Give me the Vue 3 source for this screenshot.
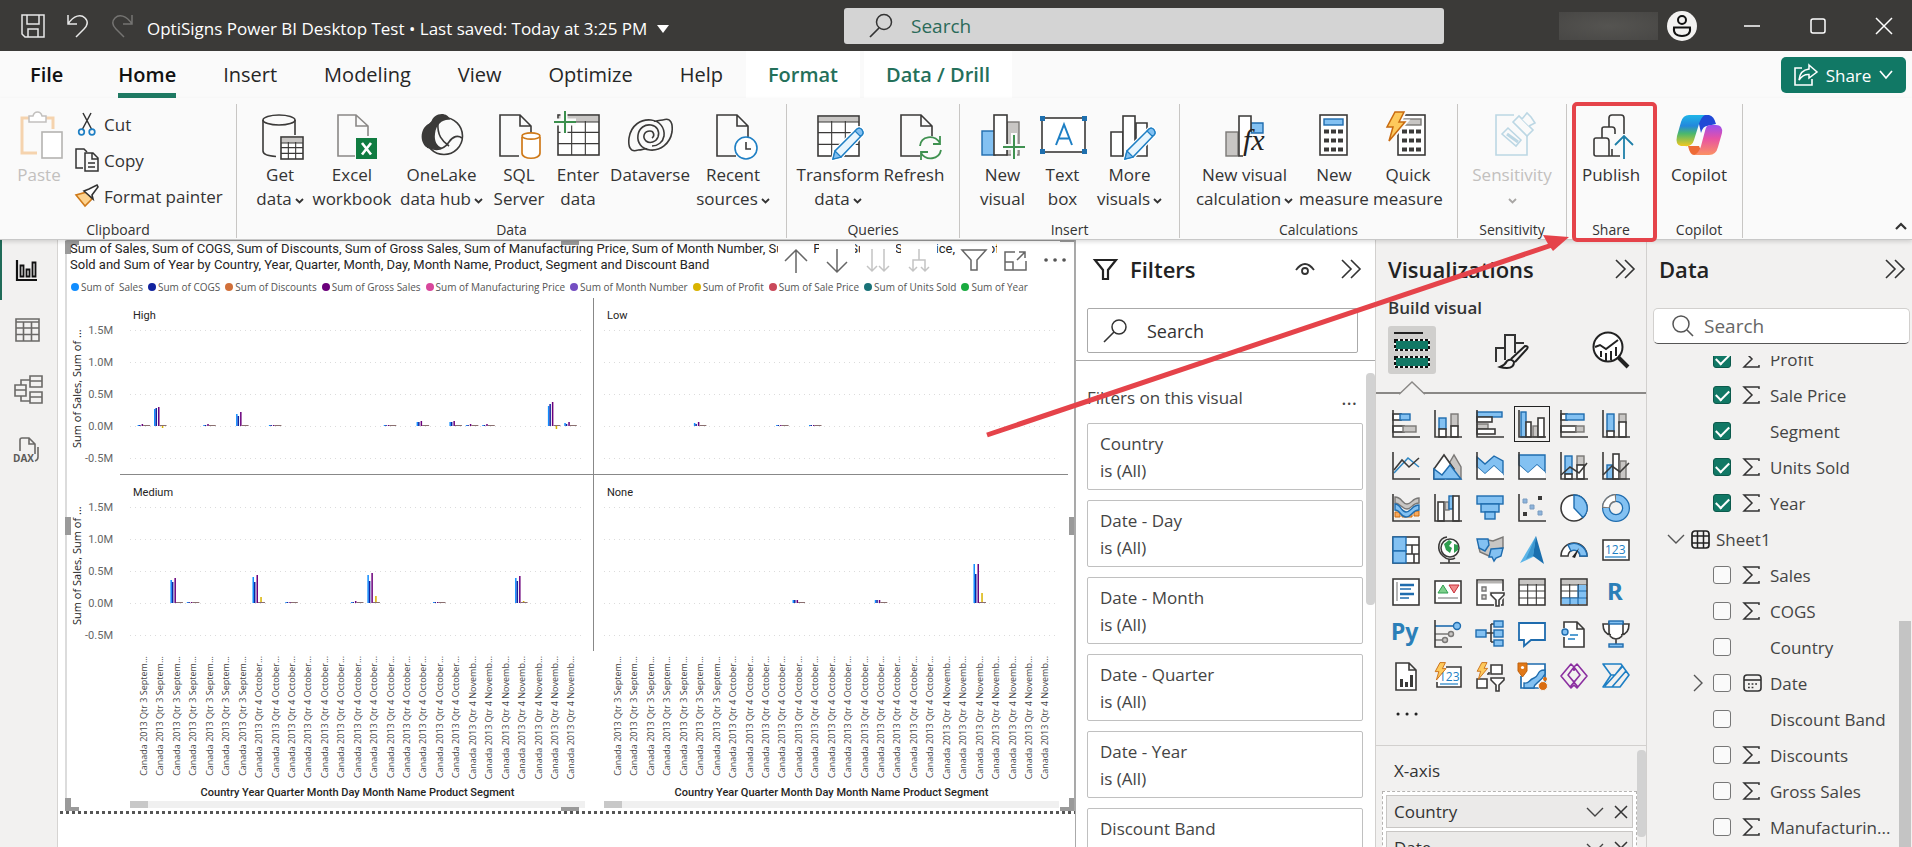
<script setup>
import { ref } from 'vue'

const tabs = ['File', 'Home', 'Insert', 'Modeling', 'View', 'Optimize', 'Help']
const contextTabs = ['Format', 'Data / Drill']

const D = 'stroke="#3b3a39" stroke-width="1.6" fill="none"'
const DW = 'stroke="#3b3a39" stroke-width="1.6" fill="#fff"'
const B = 'stroke="#1f6cae" stroke-width="1.4" fill="#83c1f2"'
const G = 'stroke="#7a7876" stroke-width="1.4" fill="#c8c6c4"'
const A = `<path d="M1 0V27H28" ${D}/>`
const page = (x) => `<path d="M${x + 19} 45H${x}V4H${x + 20}L${x + 31} 15V26M${x + 20} 4V15H${x + 31}" ${D}/>`
const calc = (x, scr) => `<rect x="${x}" y="4" width="27" height="40" ${DW}/><rect x="${x + 4}" y="8" width="19" height="6" ${scr}/><path d="M${x + 4} 20.500h19M${x + 4} 29.500h19M${x + 4} 38.500h19" stroke="#3b3a39" stroke-width="4" stroke-dasharray="5 2"/>`
const pencil = '<path d="M19 48L21 40L43 18Q46 16 48 19T48 24L27 46Z" fill="#fff" stroke="#fff" stroke-width="4"/><path d="M19 48L21 40L43 18Q46 16 48 19T48 24L27 46Z" fill="#e8f5fd" stroke="#1e7fc4" stroke-width="1.5"/><path d="M19 48L21 40L27 46ZM43 18Q46 16 48 19T48 24L46 25L41 20Z" fill="#83c1f2" stroke="#1e7fc4" stroke-width="1.2"/>'
const bolt = (s) => `<path transform="scale(${s})" d="M10 1H19L14 11H20L4 30L8 16H2Z" fill="#fdc95c" stroke="#c86a10" stroke-width="1.500"/>`
const grid = (x, y, w, h, hd) => `<rect x="${x}" y="${y}" width="${w}" height="${h}" ${DW}/><rect x="${x + 1}" y="${y + 1}" width="${w - 2}" height="${hd}" fill="#c8c6c4"/><path d="M${x} ${y + hd + 1}h${w}M${x} ${y + hd + (h - hd) / 3}h${w}M${x} ${y + hd + (h - hd) * 2 / 3}h${w}M${x + w / 3} ${y + hd}v${h - hd}M${x + w * 2 / 3} ${y + hd}v${h - hd}" stroke="#3b3a39" stroke-width="1.1" fill="none"/>`

const art = {
  get: `<path d="M7 9V40C7 43 12 45 20 45.500M39 9V24" ${D}/><ellipse cx="23" cy="9" rx="16" ry="5" ${D}/>${grid(25, 26, 22, 22, 5)}`,
  excel: `<path d="M27 45H10V4H28L40 15V25M28 4V15H40" stroke="#8a8886" stroke-width="1.6" fill="none"/><rect x="28" y="27" width="21" height="21" fill="#107c41"/><path d="M34 32L43 43.500M43 32L34 43.500" stroke="#fff" stroke-width="2.600"/>`,
  lake: `<path d="M13 12C15 1 30 0 32 9C25 8 18 13 17 23C16 30 19 35 24 37C15 40 11 36 8 36C0 28 4 14 13 12Z" fill="#3b3a39"/><circle cx="26" cy="25" r="18.500" ${D}/><path d="M13 12C10 22 12 31 20 38M20 12C19 24 24 30 31 35M9 36C20 41 27 37 31 31S40 24 44 27" ${D}/>`,
  sql: `${page(5)}<path d="M27 26V42C27 49 45 49 45 42V26" fill="#fff" stroke="#cf7a1a" stroke-width="1.700"/><ellipse cx="36" cy="25" rx="9" ry="3.200" fill="#fff" stroke="#cf7a1a" stroke-width="1.700"/>`,
  enter: `${grid(4, 4, 41, 40, 6)}<path d="M10 0V22M0 11H22" stroke="#fafafa" stroke-width="7"/><path d="M11 0V22M0 11H22" stroke="#3b8f4d" stroke-width="2"/>`,
  verse: `<path d="M37 9C45 6 47 13 46 21C44 33 34 40 24 39C15 38 11 31 12 24C13 17 19 13 25 14C31 15 34 20 32 26C30 31 24 33 20 30C16 26 18 20 24 20C28 20 29 25 26 27" ${D}/><path d="M12 39C4 42 2 35 3 27C5 14 15 8 25 9C34 10 39 17 38 25C37 31 32 35 26 35M37 9C32 9 30 11 28 10M12 39C17 39 19 37 21 38" ${D}/>`,
  recent: `${page(8)}<circle cx="37" cy="37" r="11" fill="#fff" stroke="#1e7fc4" stroke-width="1.600"/><path d="M37 31V38H42" ${D}/>`,
  transform: `${grid(4, 5, 41, 40, 5)}${pencil}`,
  refresh: `${page(11)}<circle cx="40" cy="37" r="12" fill="#fafafa"/><path d="M30 35C31 25 44 23 50 32M50 25V33H43M51 39C49 49 36 50 31 42M31 49V41H38" stroke="#3f9150" stroke-width="1.800" fill="none"/>`,
  visual: `<rect x="3" y="20" width="13" height="24" ${B}/><rect x="28" y="11" width="12" height="33" ${G}/><rect x="15" y="4" width="13" height="40" ${DW}/><path d="M35 22V48M24 36H47" stroke="#fafafa" stroke-width="6"/><path d="M35 24V48M24 36H46" stroke="#3f9150" stroke-width="2"/>`,
  text: `<rect x="3" y="7" width="43" height="34" ${DW}/><path d="M1 5h5v5h-5zM43 5h5v5h-5zM1 38h5v5h-5zM43 38h5v5h-5z" fill="#1e6fae"/><path d="M17 34L25 13.500L33 34M20 27.500H30" stroke="#1e7fc4" stroke-width="2" fill="none"/>`,
  more: `<path d="M5 45V21H17V45ZM30 45V12H41V45Z" ${DW}/><rect x="17" y="5" width="12" height="40" ${DW}/>${pencil}`,
  vcalc: `<rect x="5" y="21" width="12" height="24" ${G}/><path d="M30 12H42V22H30Z" ${B}/><path d="M22 45H18V5H30V21" ${DW}/><text x="22" y="39" font-family="Liberation Serif" font-style="italic" font-size="30" fill="#222">fx</text>`,
  calc: calc(10, B),
  quick: `${calc(14, G)}<g transform="translate(1 0)"><path d="M10 1H19L14 11H20L4 30L8 16H2Z" stroke="#fafafa" stroke-width="5"/>${bolt(1)}</g>`,
  sens: `<g fill="#fafafa" stroke="#bcd7e4" stroke-width="1.600"><path d="M26 4H8V44H39V22"/><path d="M14 23L20 17L33 29L28 35Z"/><path d="M19 23L30 31" stroke-width="3"/><path d="M25 11L31 5L45 19L39 25Z"/><path d="M34 8L39 2L43 6L47 12L41 15"/></g>`,
  publish: `<path d="M17 45H9Q7 45 7 43V29Q7 27 9 27H19Q22 27 22 30V45H17M22 45H33M15 27V18Q15 16 17 16H25Q28 16 28 19V23M25 45V38M22 16V7Q22 4 25 4H34Q37 4 37 7V23" ${D}/><path d="M37 48V25M28 34L37 25L46 34" stroke="#1e7fa8" stroke-width="1.800" fill="none"/>`,
  copilot: `<defs><linearGradient id="cpA" x1="0" y1="0" x2="0" y2="1"><stop offset="0" stop-color="#1fb5e8"/><stop offset=".35" stop-color="#2388dc"/><stop offset=".6" stop-color="#4cb86c"/><stop offset="1" stop-color="#f2c81e"/></linearGradient><linearGradient id="cpB" x1="0" y1="0" x2="0" y2="1"><stop offset="0" stop-color="#9b4ff0"/><stop offset=".45" stop-color="#e752a4"/><stop offset="1" stop-color="#fb9163"/></linearGradient></defs><path d="M22 4H34Q39 5 41 13L32 15Q28 15 26 22Z" fill="#2049d6"/><path d="M13 35H24L28 44H19Q15 44 13 35Z" fill="#ee6a36"/><path d="M14 4H30Q26 6 24 13L19 29Q17 36 10 35H6Q0 34 2 25L6 11Q8 4 14 4Z" fill="url(#cpA)"/><path d="M35 14H41Q48 14 47 22L43 36Q41 44 34 44H19Q24 42 26 35L30 20Q31 14 35 14Z" fill="url(#cpB)"/>`,
}

const groups = [
  { name: 'Data', cls: 'g-data', items: [
    { id: 'get', a: 'Get', b: 'data', more: true },
    { id: 'excel', a: 'Excel', b: 'workbook' },
    { id: 'lake', a: 'OneLake', b: 'data hub', more: true },
    { id: 'sql', a: 'SQL', b: 'Server' },
    { id: 'enter', a: 'Enter', b: 'data' },
    { id: 'verse', a: 'Dataverse' },
    { id: 'recent', a: 'Recent', b: 'sources', more: true },
  ] },
  { name: 'Queries', cls: 'g-queries', items: [
    { id: 'transform', a: 'Transform', b: 'data', more: true },
    { id: 'refresh', a: 'Refresh' },
  ] },
  { name: 'Insert', cls: 'g-insert', items: [
    { id: 'visual', a: 'New', b: 'visual' },
    { id: 'text', a: 'Text', b: 'box' },
    { id: 'more', a: 'More', b: 'visuals', more: true },
  ] },
  { name: 'Calculations', cls: 'g-calc', items: [
    { id: 'vcalc', a: 'New visual', b: 'calculation', more: true },
    { id: 'calc', a: 'New', b: 'measure' },
    { id: 'quick', a: 'Quick', b: 'measure' },
  ] },
  { name: 'Sensitivity', cls: 'g-sens', items: [{ id: 'sens', a: 'Sensitivity', b: '', more: true, off: true }] },
  { name: 'Share', cls: 'g-share', items: [{ id: 'publish', a: 'Publish' }] },
  { name: 'Copilot', cls: 'g-copilot', items: [{ id: 'copilot', a: 'Copilot' }] },
]

const rail = [
  { name: 'Report view', svg: '<path d="M2 3V23H22" stroke="#111" stroke-width="2.200" fill="none"/><path d="M5.500 8.500h3v11h-3zM11.500 12.500h3v7h-3zM17.500 5.500h3v14h-3z" stroke="#111" stroke-width="1.800" fill="none"/>' },
  { name: 'Table view', svg: '<path d="M1 2H24V24H1ZM1 5H24M1 11H24M1 17.500H24M8.500 5V24M16.500 5V24" stroke="#6b6967" stroke-width="1.600" fill="none"/>' },
  { name: 'Model view', svg: '<path d="M0 8H11V19H0ZM0 13H11M15 -1H27V10H15ZM15 4H27M15 15H27V26H15ZM15 20H27M6 8V3H15M6 19V24H15" stroke="#6b6967" stroke-width="1.600" fill="none"/>' },
  { name: 'DAX query view', svg: '<path d="M5 14V3Q5 1 7 1H14L20 7V17M14 1V7H20M23 10V20Q23 23 20 24" stroke="#6b6967" stroke-width="1.600" fill="none"/><text x="-2" y="25" font-family="Open Sans" font-weight="700" font-size="10" fill="#5c5a58">DAX</text>' },
]

const hoverTools = [
  { name: 'Drill up', svg: '<path d="M12 24V1M1 12L12 1L23 12" stroke="#666" stroke-width="1.500" fill="none"/>' },
  { name: 'Drill down', svg: '<path d="M12 0V23M2 13L12 23L22 13" stroke="#666" stroke-width="1.500" fill="none"/>' },
  { name: 'Next level', svg: '<path d="M6 0V22M1 17L6 22L11 17M18 0V22M13 17L18 22L23 17" stroke="#c4c4c4" stroke-width="1.500" fill="none"/>' },
  { name: 'Expand down', svg: '<path d="M12 0V11M6 22V11H18V22M2 18L6 22L10 18M14 18L18 22L22 18" stroke="#c4c4c4" stroke-width="1.500" fill="none"/>' },
  { name: 'Filters applied', cls: 'apart', svg: '<path d="M0 1H24L15 11V21H9V11Z" stroke="#666" stroke-width="1.500" fill="none"/>' },
  { name: 'Focus mode', svg: '<path d="M12 3H2V21H23V12M2 13H10V21M14 11L22 3M16 3H22V9" stroke="#666" stroke-width="1.500" fill="none"/>' },
  { name: 'More options', svg: '<path d="M2 11h.1M11 11h.1M20 11h.1" stroke="#555" stroke-width="3.600" stroke-linecap="round"/>' },
]

const series = [
  ['Sum of \u00a0Sales', '#118dff'], ['Sum of COGS', '#12239e'], ['Sum of Discounts', '#d1703a'],
  ['Sum of Gross Sales', '#6b007b'], ['Sum of Manufacturing Price', '#d8479c'], ['Sum of Month Number', '#744ec2'],
  ['Sum of Profit', '#d9b300'], ['Sum of Sale Price', '#c9485a'], ['Sum of Units Sold', '#197278'], ['Sum of Year', '#1aab40'],
]

const ticks = ['1.5M', '1.0M', '0.5M', '0.0M', '-0.5M']
/* month index, then Sales, COGS, Gross Sales and Profit bar lengths */
const facets = [
  { name: 'High', data: [[0, 1, 1, 2, 0], [1, 17, 18, 19, -2], [4, 1, 1, 2, 0], [6, 12, 10, 14, 1], [8, 1, 1, 1, 0], [15, 1, 1, 1, 0], [17, 4, 4, 5, 0], [19, 4, 4, 5, 0], [20, 1, 1, 2, 0], [21, 1, 1, 2, 0], [25, 20, 22, 24, -3], [26, 3, 2, 4, 0]] },
  { name: 'Low', data: [[5, 3, 2, 4, 0], [10, 1, 1, 1, 0], [12, 1, 1, 1, 0]] },
  { name: 'Medium', data: [[2, 23, 21, 25, 1], [3, 1, 1, 1, 0], [7, 26, 21, 28, 6], [9, 1, 1, 1, 0], [13, 1, 1, 2, 0], [14, 28, 22, 30, 7], [18, 1, 1, 1, 0], [23, 25, 22, 27, 2]] },
  { name: 'None', data: [[11, 3, 3, 3, 0], [16, 3, 3, 3, 0], [22, 39, 29, 39, 10]] },
]
const bars = (f) => f.data.flatMap(([i, s, c, g, p]) => {
  const at = `${1.3 + ((i + 0.5) / 27) * 97.6}%`
  const bar = (dx, h, color, w = 1.5) => ({ at, dx, w, y: h < 0 ? 98 : 98 - h, h: Math.abs(h), color })
  return [bar(-6.5, s, '#118dff'), bar(-5, c, '#12239e'), bar(-2.5, g, '#6b007b'), bar(1.3, p, '#d9b300'), bar(-1, 1, '#8a6f70', 7)]
})
const months = [...Array(7).fill('Canada 2013 Qtr 3 Septem...'), ...Array(13).fill('Canada 2013 Qtr 4 October...'), ...Array(7).fill('Canada 2013 Qtr 4 Novemb...')]

const filters = ['Country', 'Date - Day', 'Date - Month', 'Date - Quarter', 'Date - Year', 'Discount Band']

const r = (x, y, w, h, s) => `<rect x="${x}" y="${y}" width="${w}" height="${h}" ${s}/>`
const funnel = (x, y) => `<path transform="translate(${x} ${y})" d="M0 0H13V2L8 7V13H5V7L0 2Z" fill="#fff" stroke="#f2f1f0" stroke-width="4"/><path transform="translate(${x} ${y})" d="M0 0H13V2L8 7V13H5V7L0 2Z" ${DW}/>`
const gallery = [
  ['Stacked bar chart', r(1, 4, 8, 6, DW) + r(8, 4, 10, 6, B) + r(1, 16, 11, 6, DW) + r(11, 16, 13, 6, G) + A],
  ['Stacked column chart', r(5, 8, 7, 11, B) + r(5, 19, 7, 8, DW) + r(17, 4, 7, 12, G) + r(17, 16, 7, 11, DW) + A],
  ['Clustered bar chart', r(1, 2, 25, 5, B) + r(1, 7, 15, 5, DW) + r(1, 14, 11, 5, G) + r(1, 19, 18, 5, DW) + A],
  ['Clustered column chart', r(3, 2, 5, 25, B) + r(8, 12, 5, 15, DW) + r(15, 16, 5, 11, G) + r(20, 8, 6, 19, DW) + A],
  ['100% stacked bar chart', r(1, 4, 6, 6, DW) + r(6, 4, 18, 6, B) + r(1, 16, 15, 6, DW) + r(16, 16, 8, 6, G) + A],
  ['100% stacked column chart', r(5, 4, 7, 18, B) + r(5, 21, 7, 6, DW) + r(17, 4, 7, 9, G) + r(17, 12, 7, 15, DW) + A],
  ['Line chart', `<path d="M2 21L16 6L27 15" stroke="#2e86c1" stroke-width="1.600" fill="none"/><path d="M2 18L10 8L17 15L27 6" ${D}/>` + A],
  ['Area chart', `<path d="M13 15L20 3L27 15V27H13Z" ${G}/><path d="M0 17L10 3L20 17L10 27H0Z" ${DW}/><path d="M0 27V17L8 23L16 13L27 27Z" ${B}/>`],
  ['Stacked area chart', `<path d="M1 5L9 12L18 4L27 9V22L18 14L9 22L1 15Z" ${B}/><path d="M1 15L9 22L18 14L27 22V27H1Z" fill="#fff"/>` + A],
  ['100% stacked area chart', `<path d="M1 3H27V20L19 13L10 21L1 13Z" ${B}/><path d="M2 14L10 21L19 13L27 20V27H2Z" fill="#fff"/>` + A],
  ['Line and stacked column chart', r(5, 4, 7, 18, B) + r(5, 22, 7, 5, DW) + r(17, 4, 7, 9, G) + r(17, 13, 7, 14, DW) + `<path d="M1 23L10 15L19 21L27 11" ${D}/>` + A],
  ['Line and clustered column chart', r(5, 13, 6, 14, B) + r(11, 2, 6, 25, DW) + r(18, 9, 6, 18, G) + `<path d="M1 23L10 14L18 20L27 11" ${D}/>` + A],
  ['Ribbon chart', `<path d="M3 3C10 3 10 10 15 10S20 4 27 4V9C20 9 20 15 15 15S8 9 3 9Z" ${G}/><path d="M3 18H8V23H3ZM22 17H27V22H22ZM10 20H20V23H10Z" fill="#f9a95c" stroke="#c86a10"/><path d="M3 10C9 10 9 18 14 18S20 11 27 11V16C20 16 20 23 14 23S9 16 3 16Z" ${B}/>` + A],
  ['Waterfall chart', r(4, 8, 6, 19, DW) + r(11, 8, 4, 8, G) + r(15, 2, 4, 13, B) + r(19, 2, 6, 25, DW) + A],
  ['Funnel', r(1, 2, 26, 8, B) + r(5, 10, 18, 8, B) + r(9, 18, 10, 7, B)],
  ['Scatter chart', '<path d="M5 5h4v4h-4zM12 11h4v4h-4zM20 17h4v4h-4z" fill="#8db4dc" stroke="#7a9cc0"/><path d="M20 2h4v4h-4zM5 18h4v4h-4z" fill="#3b3a39"/>' + A],
  ['Pie chart', `<circle cx="14" cy="14" r="13" ${DW}/><path d="M14 1V14L23 23.500A13 13 0 0 0 14 1Z" ${B}/>`],
  ['Donut chart', `<circle cx="14" cy="14" r="10" fill="none" stroke="#1f6cae" stroke-width="8"/><circle cx="14" cy="14" r="10" fill="none" stroke="#83c1f2" stroke-width="5.500"/><path d="M4 14A10 10 0 0 1 14 4" stroke="#7a7876" stroke-width="8" fill="none"/><path d="M4 13A10 10 0 0 1 13 4" stroke="#fff" stroke-width="5.500" fill="none"/>`],
  ['Treemap', r(1, 1, 26, 26, DW) + r(1, 1, 13, 14, B) + r(1, 15, 13, 12, B) + `<path d="M14 9H27M14 18H27M20 9V18M22 18V27" ${D}/>`],
  ['Map', `<circle cx="16" cy="12" r="9" fill="#fff" stroke="#3b3a39" stroke-width="1.500"/><path d="M10 8L15 4L18 6L15 10L18 12L16 17L12 14ZM20 8L24 9L24 14L20 17Z" fill="#2f9e4f"/><path d="M13 1C4 2 2 14 9 20C13 24 18 24 21 22M15 23V27M6 27H26" ${D}/>`],
  ['Filled map', `<path d="M12 4L17 5L27 1V12L16 14L13 20L4 16L3 12L10 13Z" ${G}/><path d="M1 3H12L13 9L9 15L3 12Z" ${B}/><path d="M15 13L27 12L25 20L20 22L18 25L16 21L13 21Z" ${B}/>`],
  ['Azure map', '<path d="M18 0L2 27L17 20Z" fill="#5bb5e8"/><path d="M18 0L26 28L15 20Z" fill="#1a6fae"/><path d="M18 0L15 20L8 23Z" fill="#3d97cf"/>'],
  ['Gauge', `<path d="M1 20A13 13 0 0 1 27 20H20A6 6 0 0 0 8 20Z" ${DW}/><path d="M8 9A13 13 0 0 1 27 20H20A6 6 0 0 0 11 15Z" ${B}/><path d="M12 21L19 12L15 22Z" fill="#222"/>`],
  ['Card', r(1, 4, 26, 20, DW) + '<text x="3" y="18" font-family="Open Sans" font-size="12" fill="#1e7fc4">123</text><path d="M3 21H24" stroke="#1e7fc4" stroke-width="1.200"/>'],
  ['Multi-row card', r(1, 1, 26, 26, DW) + '<path d="M5 4V23" stroke="#999" stroke-width="1.400"/><path d="M8 7H22M8 16H22" stroke="#1f6cae" stroke-width="2.600"/><path d="M8 11H19M8 20H17" stroke="#1f6cae" stroke-width="1.400"/>'],
  ['KPI', r(1, 3, 26, 22, DW) + '<path d="M4 15L9 7L14 15Z" fill="#7fd08c" stroke="#2f9e4f"/><path d="M15 7H25L20 15Z" fill="#f08a8a" stroke="#c8303a"/><path d="M4 20H24" stroke="#999" stroke-width="1.400"/>'],
  ['Slicer', r(1, 2, 26, 25, DW) + '<path d="M2 4H26" stroke="#b5b3b1" stroke-width="3"/><path d="M6 9h4v4h-4zM6 17h4v4h-4z" fill="#d8d6d4" stroke="#777" stroke-width="1.400"/>' + funnel(15, 15)],
  ['Table', grid(1, 1, 26, 26, 5)],
  ['Matrix', grid(1, 1, 26, 26, 5) + '<path d="M19 7H26V26H2V20H10M10 20H19V7" fill="#83c1f2" fill-rule="evenodd"/><path d="M18 7V26M10 20V26M2 20H26M18 13H26" stroke="#1f6cae" stroke-width="1.200"/>'],
  ['R script visual', '<text x="5" y="22" font-family="Noto Sans" font-weight="700" font-size="24" fill="#2b7fb8">R</text>'],
  ['Python visual', '<text x="-1" y="20" font-family="Noto Sans" font-weight="700" font-size="23" fill="#2b7fb8">Py</text>'],
  ['Key influencers', `<path d="M1 6H20" stroke="#1f6cae" stroke-width="1.600"/><circle cx="23" cy="6" r="3.500" ${B}/><path d="M1 14H14M1 20H9" stroke="#7a7876" stroke-width="1.600"/><circle cx="17" cy="14" r="2.500" ${G}/><circle cx="11" cy="20" r="2.500" ${G}/>` + A],
  ['Decomposition tree', `<path d="M10 13H18M15 4V22M15 4H18M15 22H18" ${D}/>` + r(0, 10, 10, 7, B) + r(18, 1, 9, 6, B) + r(18, 10, 9, 7, B) + r(18, 20, 9, 6, B)],
  ['Q&A', '<path d="M1 3H27V20H13L6 26V20H1Z" stroke="#1f6cae" stroke-width="1.800" fill="#fff"/>'],
  ['Narrative', `<path d="M4 8V2H17L24 9V27H4V17M17 2V9H24" ${DW}/><circle cx="5" cy="12" r="3" ${B}/><path d="M10 15H18M8 19H15" stroke="#1e7fc4" stroke-width="1.600"/>`],
  ['Metrics', `<path d="M8 4H1Q1 14 9 15M20 4H27Q27 14 19 15M7 2H21V12Q21 18 14 19Q7 18 7 12ZM14 19V24" ${DW}/>` + r(7, 1, 14, 3, B) + r(7, 24, 14, 3, B)],
  ['Paginated report', `<path d="M4 1H17L24 8V28H4ZM17 1V8H24" ${DW}/><path d="M8 17h3v8h-3zM13 20h3v5h-3zM18 13h3v12h-3z" fill="#3b3a39"/>`],
  ['Card (new)', `<path d="M12 5H27V25H3V20" ${DW}/><text x="5" y="19" font-family="Open Sans" font-size="12" fill="#1e7fc4">123</text><path d="M6 22H24" stroke="#1e7fc4" stroke-width="1.200"/>` + bolt(0.6)],
  ['Slicer (new)', `<path d="M15 3H26V12H15Z" ${DW}/><path d="M1 17H11V26H1ZM11 12H13V10" ${DW}/>` + funnel(15, 16) + bolt(0.58)],
  ['ArcGIS map', `<path d="M8 2H27V26H3V14" fill="#fff" stroke="#1f6cae" stroke-width="1.700"/><path d="M27 8C18 8 22 14 16 16S12 22 6 21V26H16C16 20 22 22 27 12Z" ${B}/><path d="M0 1H9V9L4.500 15L0 9Z" fill="#e07818" stroke="#c0600c"/><circle cx="4.500" cy="5.500" r="1.600" fill="#fff"/><circle cx="25" cy="24" r="4.500" fill="#d96c10" stroke="#f2f1f0"/><circle cx="27" cy="17" r="2" fill="#d96c10"/>`],
  ['Power Apps', '<path d="M11 2L1 14L11 26L14 23L17 26L27 14L17 2L14 5ZM14 5L8 13L14 20L20 13ZM14 9V5M8 13L18 25M20 13L10 25" stroke="#8b2fa0" stroke-width="1.600" fill="none" stroke-linejoin="round"/>'],
  ['Power Automate', '<path d="M1 2H19L27 13L18 25H1L9 13ZM9 13H13L20 4M3 24L20 5M10 25L24 9" stroke="#1e7fc4" stroke-width="1.600" fill="none" stroke-linejoin="round"/>'],
]

const SIGMA = '<path d="M16 3V1H1L9 9L1 17H16V15" stroke="#333" stroke-width="1.500" fill="none"/>'
const CAL = '<rect x="1" y="1" width="17" height="16" rx="3" stroke="#333" stroke-width="1.600" fill="none"/><path d="M1 6H18" stroke="#333" stroke-width="1.600"/><path d="M5 10H15M5 13.500H12" stroke="#333" stroke-width="1.600" stroke-dasharray="1.800 1.800"/>'
const fields = ref([
  { name: 'Profit', on: true, icon: SIGMA }, { name: 'Sale Price', on: true, icon: SIGMA }, { name: 'Segment', on: true },
  { name: 'Units Sold', on: true, icon: SIGMA }, { name: 'Year', on: true, icon: SIGMA },
  { name: 'Sheet1', table: true },
  { name: 'Sales', icon: SIGMA }, { name: 'COGS', icon: SIGMA }, { name: 'Country' }, { name: 'Date', icon: CAL, open: true },
  { name: 'Discount Band' }, { name: 'Discounts', icon: SIGMA }, { name: 'Gross Sales', icon: SIGMA }, { name: 'Manufacturin...', icon: SIGMA },
])
</script>

<template>
  <div class="app">
    <header class="titlebar">
      <div class="quick">
        <button aria-label="Save"><svg width="24" height="24"><path d="M1 1H23V23H4L1 20ZM6 1V10H18V1M7 23V15H17V23" stroke="#e8e8e8" stroke-width="1.5" fill="none" /></svg></button>
        <button aria-label="Undo"><svg width="24" height="24"><path d="M2 1V10H11M2 10C8 1 15 0 19 4S21 12 18 15L10 23" stroke="#e8e8e8" stroke-width="1.500" fill="none" /></svg></button>
        <button aria-label="Redo"><svg width="24" height="24"><path d="M21 1V10H12M21 10C15 1 8 0 4 4S2 12 5 15L13 23" stroke="#757472" stroke-width="1.500" fill="none" /></svg></button>
      </div>
      <button class="doc">OptiSigns Power BI Desktop Test • Last saved: Today at 3:25 PM<svg width="12" height="8"><path d="M0 0H12L6 8Z" fill="#fff" /></svg></button>
      <label class="topsearch">
        <svg width="24" height="24"><circle cx="15" cy="8" r="7.500" stroke="#333" stroke-width="1.500" fill="none" /><path d="M10 14L1 23" stroke="#333" stroke-width="1.700" /></svg>
        <input type="text" placeholder="Search" aria-label="Search">
      </label>
      <div class="account">
        <span class="masked"></span>
        <button class="avatar" aria-label="Account"><svg width="30" height="30"><circle cx="15" cy="15" r="15" fill="#f3f2f1" /><circle cx="15" cy="9" r="4" stroke="#111" stroke-width="2" fill="none" /><path d="M7 16.500H23Q24 25 15 25T7 16.500Z" stroke="#111" stroke-width="2" fill="none" /></svg></button>
      </div>
      <div class="win">
        <button aria-label="Minimize"><svg width="16" height="16"><path d="M0 8H16" stroke="#fff" stroke-width="1.500" /></svg></button>
        <button aria-label="Maximize"><svg width="16" height="16"><rect x="1" y="1" width="14" height="14" rx="2" stroke="#fff" stroke-width="1.500" fill="none" /></svg></button>
        <button aria-label="Close"><svg width="16" height="16"><path d="M0 0L16 16M16 0L0 16" stroke="#fff" stroke-width="1.500" /></svg></button>
      </div>
    </header>

    <nav class="tabs">
      <button v-for="t in tabs" :key="t" class="tab" :class="{ file: t === 'File', home: t === 'Home' }"><span>{{ t }}</span></button>
      <button v-for="t in contextTabs" :key="t" class="tab context"><span>{{ t }}</span></button>
      <button class="share">
        <svg width="24" height="22"><path d="M8 4H1V21H18V15" stroke="#fff" stroke-width="1.600" fill="none" /><path d="M15 1L23 8L15 14V10.500Q9 10 5 16Q6 6 15 5Z" stroke="#fff" stroke-width="1.500" fill="none" /></svg>
        Share
        <svg width="14" height="10"><path d="M1 1L7 8L13 1" stroke="#fff" stroke-width="1.700" fill="none" /></svg>
      </button>
    </nav>

    <section class="ribbon">
      <div class="group g-clip">
        <div class="tools">
          <button class="tool paste off">
            <svg width="48" height="48"><path d="M22 42H7V7H38V18" stroke="#f5d3ae" stroke-width="3" fill="none" /><path d="M14 11V5H18Q19 1 22.500 1T27 5H31V11Z" fill="#fff" stroke="#c2c0be" stroke-width="1.500" /><rect x="27" y="21" width="20" height="26" fill="#fff" stroke="#b5b3b1" stroke-width="1.600" /></svg>
            <span>Paste</span>
          </button>
          <div class="clipcol">
            <button><svg width="24" height="24"><path d="M8 1L17 18M16 1L7 18" stroke="#333" stroke-width="1.500" /><circle cx="6.500" cy="20" r="2.800" stroke="#1e7fc4" stroke-width="1.700" fill="none" /><circle cx="17" cy="20" r="2.800" stroke="#1e7fc4" stroke-width="1.700" fill="none" /></svg>Cut</button>
            <button><svg width="24" height="24"><path d="M8 20H1V1H9L12 4" stroke="#333" stroke-width="1.500" fill="none" /><path d="M10 5H18L23 10V23H10ZM17 5V11H23M13 15H20M13 19H20" stroke="#333" stroke-width="1.500" fill="none" /></svg>Copy</button>
            <button><svg width="24" height="24"><path d="M10 22L1 11L12 8L17 15Z" fill="#fdd28e" stroke="#cf7a1a" stroke-width="1.600" /><path d="M9 7L14 5L22 1L23 3L17 11L18 15Z" fill="#fff" stroke="#333" stroke-width="1.600" /></svg>Format painter</button>
          </div>
        </div>
        <h2>Clipboard</h2>
      </div>
      <div v-for="g in groups" :key="g.name" class="group" :class="g.cls">
        <div class="tools">
          <button v-for="b in g.items" :key="b.id" class="tool" :class="['t-' + b.id, { off: b.off }]">
            <svg width="48" height="48" v-html="art[b.id]"></svg>
            <span>{{ b.a }}</span>
            <span v-if="b.b || b.more">{{ b.b }}<svg v-if="b.more" class="chev" width="9" height="6"><path d="M1 1L4.500 4.500L8 1" :stroke="b.off ? '#a8a6a4' : '#333'" stroke-width="1.800" fill="none" /></svg></span>
          </button>
        </div>
        <h2>{{ g.name }}</h2>
      </div>
      <button class="collapse" aria-label="Collapse ribbon"><svg width="12" height="8"><path d="M1 7L6 2L11 7" stroke="#333" stroke-width="2.200" fill="none" /></svg></button>
    </section>

    <main class="work">
      <nav class="rail">
        <button v-for="v in rail" :key="v.name" :aria-label="v.name"><svg width="26" height="26" v-html="v.svg"></svg></button>
      </nav>

      <section class="canvas">
        <article class="visual">
          <h1>Sum of Sales, Sum of COGS, Sum of Discounts, Sum of Gross Sales, Sum of Manufacturing Price, Sum of Month Number, Sum of Profit, Sum of Sale Price, Sum of Unit<br>Sold and Sum of Year by Country, Year, Quarter, Month, Day, Month Name, Product, Segment and Discount Band</h1>
          <ul class="legend">
            <li v-for="s in series" :key="s[0]"><i :style="{ background: s[1] }"></i>{{ s[0] }}</li>
          </ul>
          <div class="facets">
            <template v-for="(f, n) in facets" :key="f.name">
              <div v-if="n % 2 === 0" class="axis" :class="{ lower: n > 1 }">
                <span class="ytitle">Sum of Sales, Sum of ...</span>
                <ol><li v-for="t in ticks" :key="t">{{ t }}</li></ol>
              </div>
              <div class="facet" :class="{ right: n % 2, lower: n > 1 }">
                <h3>{{ f.name }}</h3>
                <svg class="plot" width="100%" height="136">
                  <line v-for="k in 5" :key="k" x1="0" x2="100%" :y1="k * 32 - 29.5" :y2="k * 32 - 29.5" stroke="#dcdcdc" stroke-dasharray="1 4" />
                  <rect v-for="(b, j) in bars(f)" :key="j" :x="b.at" :y="b.y" :width="b.w" :height="b.h" :fill="b.color" :transform="`translate(${b.dx} 0)`" />
                </svg>
              </div>
            </template>
          </div>
          <div class="xaxes">
            <div v-for="k in 2" :key="k" class="xaxis">
              <ol><li v-for="(m, i) in months" :key="i">{{ m }}</li></ol>
              <h4>Country Year Quarter Month Day Month Name Product Segment</h4>
              <div class="hscroll"><i></i></div>
            </div>
          </div>
          <div class="hover">
            <button v-for="t in hoverTools" :key="t.name" :class="t.cls" :aria-label="t.name"><svg width="24" height="24" v-html="t.svg"></svg></button>
          </div>
          <i v-for="h in ['tl', 'tm', 'tr', 'ml', 'mr', 'bl', 'bm', 'br']" :key="h" class="handle" :class="h"></i>
        </article>
        <div class="pageedge"></div>
      </section>

      <aside class="filters">
        <header>
          <svg width="25" height="23"><path d="M2 2H23L15 12V21H10V12Z" stroke="#222" stroke-width="2.200" fill="none" /></svg>
          <h2>Filters</h2>
          <button aria-label="Show pane"><svg width="20" height="14"><path d="M1 8Q10 -4 19 8" stroke="#333" stroke-width="1.800" fill="none" /><circle cx="10" cy="9" r="3" stroke="#333" stroke-width="1.800" fill="none" /></svg></button>
          <button aria-label="Collapse pane"><svg width="20" height="20"><path d="M1 1L10 10L1 19M10 1L19 10L10 19" stroke="#333" stroke-width="1.600" fill="none" /></svg></button>
        </header>
        <label class="search">
          <svg width="24" height="24"><circle cx="16" cy="8" r="7" stroke="#333" stroke-width="1.500" fill="none" /><path d="M11 13L1 23" stroke="#333" stroke-width="1.600" /></svg>
          <input type="text" placeholder="Search" aria-label="Search filters">
        </label>
        <div class="flist">
          <h3>Filters on this visual <button aria-label="More options">...</button></h3>
          <div v-for="f in filters" :key="f" class="card"><b>{{ f }}</b><span>is (All)</span></div>
          <i class="thumb"></i>
        </div>
      </aside>

      <aside class="viz">
        <header><h2>Visualizations</h2><button aria-label="Collapse pane"><svg width="20" height="20"><path d="M1 1L10 10L1 19M10 1L19 10L10 19" stroke="#333" stroke-width="1.600" fill="none" /></svg></button></header>
        <h3>Build visual</h3>
        <div class="modes">
          <button class="on" aria-label="Build visual"><svg width="48" height="48"><path d="M6 7H35" stroke="#222" stroke-width="2" /><path d="M7 14H41V24H7ZM7 31H41V41H7Z" fill="#117865" stroke="#eee" stroke-width="2" /><path d="M7 14H41V24H7ZM7 31H41V41H7Z" fill="none" stroke="#111" stroke-width="2" stroke-dasharray="3 2" /></svg></button>
          <button aria-label="Format visual"><svg width="48" height="48"><path d="M9 36V22H18V34M18 24V9H28V27M28 17H37" stroke="#333" stroke-width="2" fill="none" /><path d="M13 41Q18 39 20 35Q24 32 27 36Q27 42 20 42Q16 42 13 41Z M24 33L38 20Q42 20 40 23L28 36" stroke="#222" stroke-width="2" fill="#f2f1f0" /></svg></button>
          <button aria-label="Analytics"><svg width="48" height="48"><circle cx="22" cy="21" r="14.500" stroke="#222" stroke-width="2" fill="#fff" /><path d="M9 21L14 19L20 23L32 14M15 25V31M20 27V35M25 25V34M30 21V30" stroke="#222" stroke-width="2" fill="none" /><path d="M32 31L42 41" stroke="#222" stroke-width="4" /></svg></button>
        </div>
        <div class="notch"><svg width="26" height="14"><path d="M0 13L1 12.500L13 1L25 12.500L26 13" fill="#f2f1f0" stroke="#8a8886" stroke-width="1.500" /></svg></div>
        <div class="gallery">
          <button v-for="(g, i) in gallery" :key="g[0]" :class="{ on: i === 3 }" :aria-label="g[0]"><svg width="28" height="28" v-html="g[1]"></svg></button>
        </div>
        <button class="dots" aria-label="Get more visuals"><svg width="24" height="6"><path d="M3 3h.1M12 3h.1M21 3h.1" stroke="#222" stroke-width="3" stroke-linecap="round" /></svg></button>
        <div class="wells">
          <h4>X-axis</h4>
          <div class="well">
            <div v-for="w in ['Country', 'Date']" :key="w" class="pill">
              <span>{{ w }}</span>
              <button :aria-label="w + ' options'"><svg width="18" height="10"><path d="M1 1L9 9L17 1" stroke="#444" stroke-width="1.400" fill="none" /></svg></button>
              <button :aria-label="'Remove ' + w"><svg width="12" height="12"><path d="M0 0L12 12M12 0L0 12" stroke="#333" stroke-width="1.500" /></svg></button>
            </div>
          </div>
          <i class="thumb"></i>
        </div>
      </aside>

      <aside class="data">
        <header><h2>Data</h2><button aria-label="Collapse pane"><svg width="20" height="20"><path d="M1 1L10 10L1 19M10 1L19 10L10 19" stroke="#333" stroke-width="1.600" fill="none" /></svg></button></header>
        <label class="search">
          <svg width="22" height="22"><circle cx="9" cy="9" r="8" stroke="#555" stroke-width="1.500" fill="none" /><path d="M15 15L21 21" stroke="#555" stroke-width="1.600" /></svg>
          <input type="text" placeholder="Search" aria-label="Search data">
        </label>
        <div class="tree">
          <ul>
            <li v-for="f in fields" :key="f.name" :class="{ table: f.table }">
              <template v-if="f.table">
                <svg width="18" height="10"><path d="M1 1L9 9L17 1" stroke="#555" stroke-width="1.400" fill="none" /></svg>
                <svg width="19" height="19"><rect x="1" y="1" width="17" height="17" rx="3" stroke="#222" stroke-width="1.700" fill="none" /><path d="M1 6H18M1 13H18M6.500 1V18M12.500 1V18" stroke="#222" stroke-width="1.500" /></svg>
                <span>{{ f.name }}</span>
              </template>
              <template v-else>
                <span class="twist"><svg v-if="f.open" width="10" height="18"><path d="M1 1L9 9L1 17" stroke="#555" stroke-width="1.400" fill="none" /></svg></span>
                <label>
                  <input v-model="f.on" type="checkbox">
                  <svg width="19" height="18" v-html="f.icon"></svg>
                  <span>{{ f.name }}</span>
                </label>
              </template>
            </li>
          </ul>
          <i class="thumb"></i>
        </div>
      </aside>
    </main>

    <div class="callout">
      <i class="box"></i>
      <svg width="590" height="210"><path d="M1 200L566 10" stroke="#e5434a" stroke-width="5" /><path d="M583 2L557 0L562 9L567 16Z" fill="#e5434a" /></svg>
    </div>
  </div>
</template>

<style>
body { margin: 0; overflow: hidden; }
</style>

<style scoped>
* { box-sizing: border-box; }
.app { position: relative; height: 100vh; display: flex; flex-direction: column; overflow: hidden; font-family: "Open Sans", "Noto Sans", sans-serif; font-size: 16px; color: #333; background: #fafafa; }
button { border: 0; padding: 0; background: none; font: inherit; color: inherit; display: flex; align-items: center; justify-content: center; white-space: nowrap; }
svg { display: block; flex: none; overflow: visible; }
h1, h2, h3, h4, ul, ol { margin: 0; padding: 0; list-style: none; font-weight: 400; }
input[type="text"] { border: 0; outline: 0; background: none; font: inherit; color: inherit; padding: 0; min-width: 0; flex: 1; }
input::placeholder { color: inherit; opacity: 1; }

.titlebar { flex: none; height: 51px; display: flex; align-items: center; background: #3b3a38; color: #fff; padding-left: 21px; position: relative; }
.quick { display: flex; gap: 21px; width: 126px; }
.doc { font-size: 17px; gap: 10px; padding-top: 6px; }
.topsearch { position: absolute; left: 844px; right: 468px; top: 8px; height: 36px; background: #d4d4d4; border-radius: 3px; display: flex; align-items: center; gap: 18px; padding-left: 25px; color: #2b6a59; font-size: 19px; }
.account { margin-left: auto; display: flex; align-items: center; gap: 9px; }
.masked { width: 99px; height: 28px; background: radial-gradient(#555451, #484745); }
.win { display: flex; gap: 50px; padding: 0 20px 0 47px; }

.tabs { flex: none; height: 47px; display: flex; align-items: stretch; padding: 0 6px 0 30px; font-size: 20px; color: #262626; }
.tab { margin-right: 47px; border-bottom: 5px solid transparent; padding-top: 5px; }
.file, .home { font-weight: 600; color: #111; }
.file { margin-right: 55px; }
.home { border-color: #1f7a63; }
.context { color: #24705a; font-weight: 600; background: #fff; padding-left: 22px; padding-right: 22px; margin-right: 4px; margin-left: 0; }
.context:nth-child(8) { margin-left: -24px; }
.share { margin: 6px 0 5px auto; height: 36px; width: 125px; background: #117865; color: #fff; border-radius: 5px; font-size: 17px; gap: 8px; }

.ribbon { flex: none; height: 142px; display: flex; padding-top: 6px; border-bottom: 1px solid #c8c8c8; box-shadow: 0 2px 4px #0002; position: relative; z-index: 1; background: #fafafa; }
.group { display: flex; flex-direction: column; justify-content: space-between; height: 134px; border-right: 1px solid #c8c6c4; }
.group h2 { font-size: 14px; line-height: 16px; text-align: center; }
.tools { display: flex; justify-content: center; height: 112px; padding-top: 7px; }
.tool { flex-direction: column; justify-content: flex-start; font-size: 17px; line-height: 24px; }
.tool > svg { margin-bottom: 4px; }
.tool span { display: flex; align-items: center; justify-content: center; gap: 3px; height: 24px; }
.tool .chev { margin-top: 3px; }
.off { color: #c2c0be; }
.g-clip { width: 237px; }
.g-clip .tools { justify-content: flex-start; padding-left: 15px; gap: 12px; }
.paste { width: 48px; }
.clipcol { display: flex; flex-direction: column; margin-top: -5px; }
.clipcol button { height: 36px; justify-content: flex-start; gap: 5px; font-size: 17px; }
.g-data { width: 550px; }
.g-queries { width: 173px; }
.g-insert { width: 220px; }
.g-calc { width: 278px; }
.g-sens { width: 109px; }
.g-share { width: 89px; }
.g-copilot { width: 87px; }
.t-get, .t-refresh { width: 70px; }
.t-excel, .t-more, .t-calc { width: 74px; }
.t-lake, .t-vcalc { width: 105px; }
.t-sql { width: 50px; }
.t-enter { width: 68px; }
.t-verse { width: 76px; }
.t-recent { width: 90px; }
.t-transform { width: 82px; }
.t-sens { width: 80px; }
.t-visual, .t-text { width: 60px; }
.t-quick { width: 74px; }
.collapse { margin: auto 5px 9px auto; }

.work { flex: 1; min-height: 0; display: grid; grid-template-columns: 58px minmax(0, 1fr) 300px 271px 266px; grid-template-rows: minmax(0, 1fr); }
.rail { background: #f2f1f0; border-right: 1px solid #d6d4d2; display: flex; flex-direction: column; }
.rail button { height: 60px; border-left: 2px solid transparent; padding-right: 4px; }
.rail button:first-child { border-color: #1f6b58; }
.canvas { background: #fff; padding-left: 7px; }
.visual { position: relative; height: 571px; border-left: 2px solid #dcdcdc; border-right: 1px solid #a8a8a8; border-top: 1px solid #999; font-family: Roboto, sans-serif; }
.visual h1 { font-size: 13px; line-height: 16px; color: #252423; padding-left: 3px; white-space: nowrap; }
.legend { display: flex; gap: 5px; padding: 7px 0 0 4px; font: 10px/14px "Open Sans", sans-serif; color: #555; white-space: nowrap; }
.legend li { display: flex; align-items: center; gap: 2px; }
.legend i { width: 8px; height: 8px; border-radius: 50%; }
.facets { display: grid; grid-template-columns: 53px minmax(0, 474fr) minmax(0, 474fr); grid-template-rows: 177px 176px; margin: 4px 6px 0 0; }
.axis { display: flex; justify-content: space-between; padding-top: 24px; }
.ytitle { writing-mode: vertical-rl; transform: rotate(180deg); font: 11px/14px "Open Sans", sans-serif; white-space: nowrap; height: 126px; color: #222; margin-left: 3px; }
.axis ol { font-size: 11px; color: #666; text-align: right; padding-right: 7px; }
.axis li { height: 32px; line-height: 18px; }
.facet { border-bottom: 1px solid #888; border-right: 1px solid #888; padding: 10px 9px 0 10px; }
.facet.right { border-right: 0; }
.facet.lower { border-bottom: 0; }
.facet h3 { font-size: 11px; line-height: 16px; padding-left: 3px; color: #252423; }
.plot { margin-top: 4px; }
.xaxes { display: grid; grid-template-columns: 1fr 1fr; padding: 5px 6px 0 53px; }
.xaxis { padding: 0 9px 0 10px; }
.xaxis ol { display: flex; height: 129px; align-items: flex-start; padding: 0 5px 0 6px; }
.xaxis li { flex: 1; writing-mode: vertical-rl; transform: rotate(180deg); font: 9px/16px "Open Sans", sans-serif; color: #444; white-space: nowrap; display: flex; justify-content: flex-end; }
.xaxis h4 { font-size: 11px; font-weight: 500; line-height: 16px; text-align: center; color: #252423; }
.hscroll { height: 7px; background: #f0f0f0; }
.hscroll i { display: block; width: 18px; height: 7px; background: #c8c8c8; }
.hover { position: absolute; right: 0; top: 1px; display: flex; gap: 5px; }
.hover button { width: 36px; height: 37px; background: #fff; }
.hover .apart { margin-left: 14px; }
.handle { position: absolute; background: #9a9a9a; }
.tl { left: -2px; top: 0; width: 14px; height: 13px; background: none; border-left: 6px solid #9a9a9a; border-top: 4px solid #9a9a9a; z-index: -1; }
.tm, .bm { left: 494px; width: 18px; height: 4px; top: 0; }
.bm { top: auto; bottom: 0; }
.tr { right: 0; top: 0; width: 14px; height: 1px; }
.ml, .mr { left: -2px; top: 276px; width: 6px; height: 18px; }
.mr { left: auto; right: 0; width: 5px; }
.bl, .br { left: -2px; bottom: 0; width: 14px; height: 13px; background: none; border-left: 6px solid #9a9a9a; border-bottom: 4px solid #9a9a9a; }
.br { left: auto; right: 0; border-left: 0; border-right: 5px solid #9a9a9a; }
.visual { z-index: 0; }
.pageedge { height: 3px; margin-left: -5px; background: repeating-linear-gradient(90deg, #555 0 3px, transparent 3px 6px); }

aside { min-width: 0; overflow: hidden; position: relative; }
aside header { display: flex; align-items: center; height: 58px; }
aside header h2 { flex: 1; font-weight: 600; font-size: 22px; color: #222; }
.filters { background: #fff; border-left: 1px solid #aaa; display: flex; flex-direction: column; }
.filters header { flex: none; padding: 0 14px 0 17px; gap: 26px; }
.filters header h2 { margin-left: -14px; }
.search { display: flex; align-items: center; font-size: 18px; }
.filters .search { flex: none; margin: 10px 17px 0 11px; height: 45px; border: 1px solid #aaa; border-radius: 2px; padding-left: 15px; gap: 20px; }
.flist { flex: 1; min-height: 0; position: relative; margin-top: 7px; border-top: 1px solid #aaa; padding: 24px 12px 0 11px; color: #444; }
.flist h3 { display: flex; justify-content: space-between; align-items: flex-start; height: 38px; line-height: 26px; padding-right: 6px; font-size: 17px; }
.flist h3 button { font-size: 20px; }
.card { height: 67px; border: 1px solid #c0c0c0; border-radius: 2px; margin-bottom: 10px; padding: 6px 12px; font-size: 17px; line-height: 27px; display: flex; flex-direction: column; }
.card b { font-weight: 400; }
.thumb { position: absolute; right: 0; width: 9px; background: #d2d2d2; border-radius: 4px; }
.flist .thumb { top: 12px; height: 232px; }

.viz, .data { background: #f2f1f0; border-left: 1px solid #d2d0ce; display: flex; flex-direction: column; }
.viz header { flex: none; padding: 0 11px 0 12px; }
.viz h3 { padding-left: 12px; font-size: 17px; font-weight: 600; line-height: 20px; color: #333; }
.modes { display: flex; justify-content: space-between; padding: 8px 12px 0 12px; }
.modes button { width: 48px; height: 48px; border-radius: 3px; }
.modes .on { background: #d0cfcd; }
.notch { height: 20px; border-bottom: 2px solid #8a8886; padding: 7px 0 0 23px; }
.gallery { display: grid; grid-template-columns: repeat(6, 42px); grid-auto-rows: 42px; padding: 9px 0 0 9px; }
.gallery .on { border: 1px solid #222; width: 36px; height: 36px; margin: 3px; }
.dots { margin: 7px 0 0 19px; align-self: flex-start; height: 20px; }
.wells { flex: 1; min-height: 0; position: relative; margin-top: 21px; border-top: 1px solid #d2d0ce; padding: 12px 9px 0 6px; }
.wells h4 { font-size: 17px; line-height: 26px; padding: 0 0 7px 12px; }
.well { border: 1px dashed #b5b3b1; background: #fff; padding: 3px; }
.pill { height: 33px; border: 1px solid #c8c6c4; background: #ebeae9; display: flex; align-items: center; gap: 11px; padding: 0 5px 0 7px; margin-bottom: 3px; font-size: 17px; }
.pill span { flex: 1; }
.wells .thumb { top: 4px; height: 87px; }

.data header { flex: none; padding: 0 7px 0 12px; }
.data .search { flex: none; margin: 10px 2px 0 6px; height: 36px; background: #fff; border: 1px solid #d2d0ce; border-bottom: 1px solid #555; border-radius: 5px; padding-left: 18px; gap: 10px; color: #666; font-size: 19px; }
.tree { flex: 1; min-height: 0; overflow: hidden; margin-top: 12px; position: relative; }
.tree ul { margin-top: -15px; }
.tree li { height: 36px; display: flex; align-items: center; font-size: 17px; color: #444; padding-left: 46px; white-space: nowrap; }
.tree .table { padding-left: 20px; gap: 6px; }
.twist { width: 20px; }
.tree label { display: flex; align-items: center; }
.tree label svg { margin: 0 8px 0 12px; }
.tree input { appearance: none; margin: 0; width: 18px; height: 18px; border: 1px solid #777; border-radius: 3px; background: #fafafa; display: flex; justify-content: center; }
.tree input:checked { background: #117865; border-color: #0c5a4c; }
.tree input:checked::before { content: ""; width: 11px; height: 6px; margin-top: 3px; border: solid #fff; border-width: 0 0 2px 2px; transform: rotate(-45deg); }
.tree .thumb { top: 265px; bottom: 0; right: 1px; width: 12px; background: #c4c4c4; border-radius: 0; }

.callout { position: absolute; z-index: 2; right: 255px; top: 102px; width: 671px; height: 340px; pointer-events: none; }
.box { position: absolute; right: 0; top: 0; width: 85px; height: 140px; border: 4px solid #e5434a; border-radius: 5px; }
.callout svg { position: absolute; left: 0; top: 133px; }
</style>
